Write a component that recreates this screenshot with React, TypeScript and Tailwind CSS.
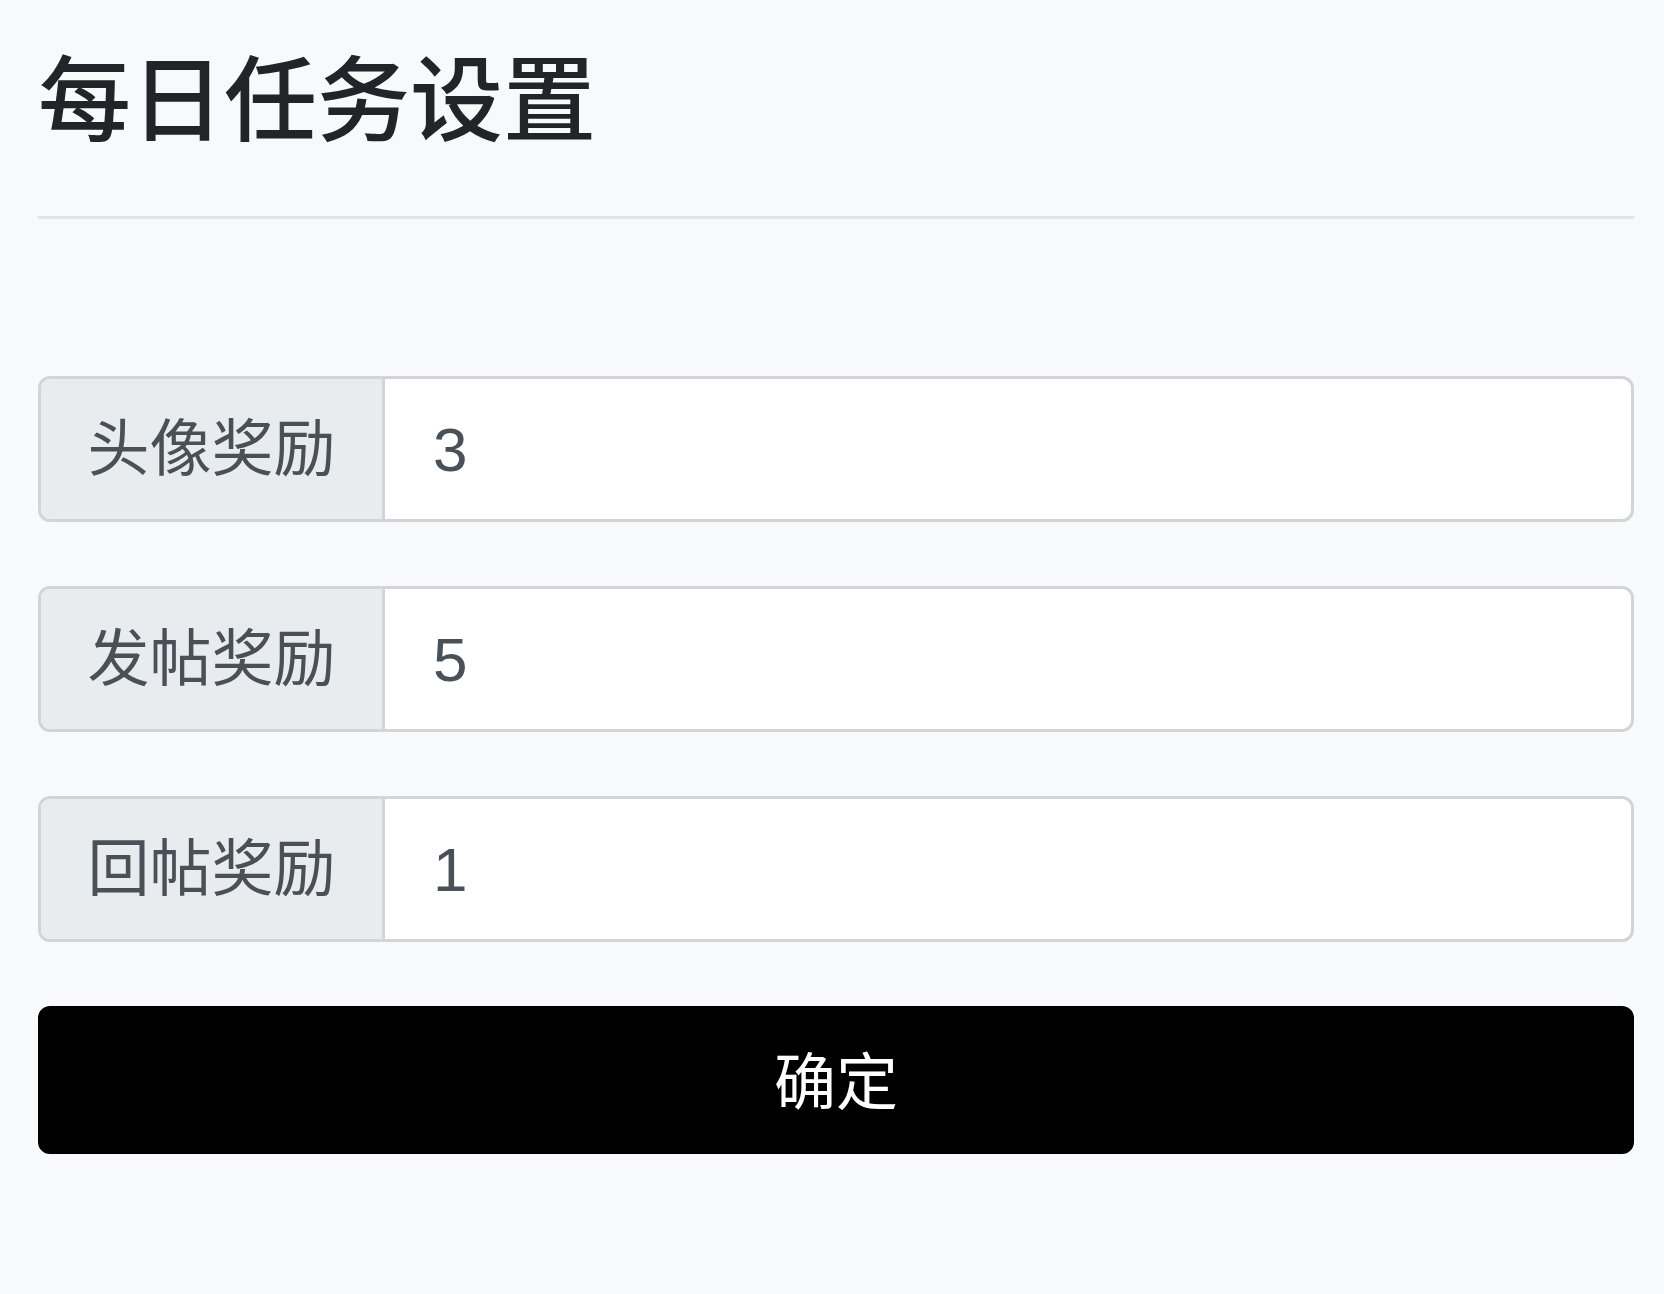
import React from "react";

const rows = [
  { label: "头像奖励", value: "3" },
  { label: "发帖奖励", value: "5" },
  { label: "回帖奖励", value: "1" },
];

export default function App() {
  return (
    <div
      className="min-h-[1294px] w-[1664px] bg-[#f8f9fa] pl-[38px] pr-[30px]"
      style={{ fontFamily: '"Liberation Sans", "Noto Sans CJK SC", sans-serif' }}
    >
      <h1 className="pt-[56px] text-[93px] font-medium leading-none text-[#212529]">每日任务设置</h1>
      <div className="mt-[67px] h-[3px] bg-[#e3e4e6]" />
      <div className="mt-[157px] flex flex-col gap-[64px]">
        {rows.map((r) => (
          <div key={r.label} className="flex h-[146px] rounded-[12px] border-[3px] border-[#d2d4d7] bg-white overflow-hidden">
            <div className="flex w-[344px] items-center justify-center border-r-[3px] border-[#d2d4d7] bg-[#e9ecef] text-[62px] text-[#495057]">
              {r.label}
            </div>
            <div className="flex flex-1 items-center pl-[48px] text-[62px] text-[#495057]">{r.value}</div>
          </div>
        ))}
        <button className="flex h-[148px] items-center justify-center rounded-[12px] bg-black pt-[6px] text-[62px] text-white">
          确定
        </button>
      </div>
    </div>
  );
}
